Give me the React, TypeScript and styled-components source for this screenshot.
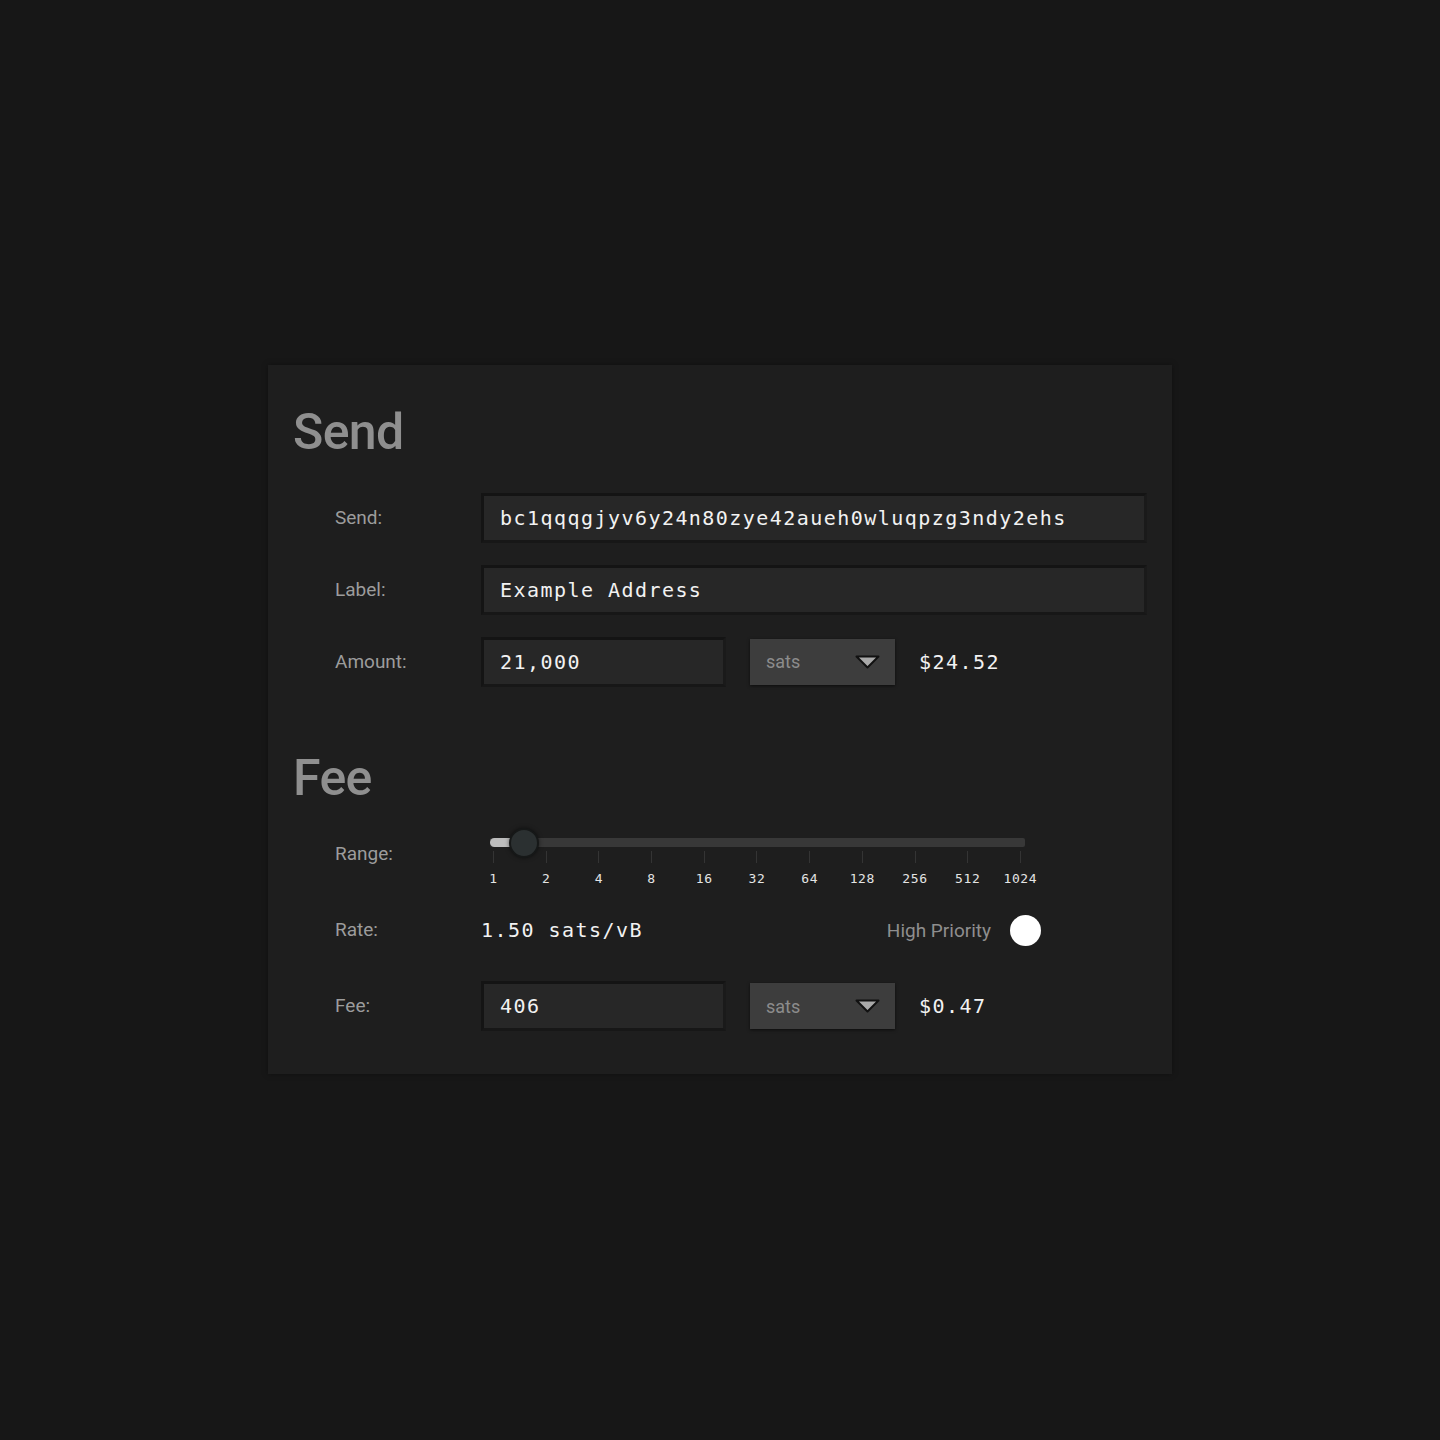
import React from "react";
import styled, { createGlobalStyle } from "styled-components";

const Global = createGlobalStyle`
  html, body { margin: 0; padding: 0; background: #171717; }
  body { font-family: Roboto, "Liberation Sans", sans-serif; }
`;

const Page = styled.div`
  min-height: 1440px;
  padding: 365px 0 0 268px;
  box-sizing: border-box;
`;

const Panel = styled.section`
  width: 904px;
  box-sizing: border-box;
  background: #1e1e1e;
  padding: 41px 24px 43px 25px;
  display: flex;
  flex-direction: column;
  box-shadow: 0 0 6px rgba(0, 0, 0, 0.35);
`;

const Heading = styled.h2<{ $mt?: number }>`
  margin: ${(p) => p.$mt ?? 0}px 0 0 0;
  font-family: Roboto, "Liberation Sans", sans-serif;
  font-weight: 500;
  font-size: 50px;
  line-height: 52px;
  letter-spacing: -0.6px;
  color: #8f8f8f;
`;

const Row = styled.div<{ $mt: number; $h?: number; $align?: string }>`
  display: flex;
  align-items: ${(p) => p.$align ?? "center"};
  margin-top: ${(p) => p.$mt}px;
  height: ${(p) => (p.$h ? `${p.$h}px` : "auto")};
  padding-left: 42px;
`;

const Label = styled.div<{ $lh?: number }>`
  width: 146px;
  flex: none;
  font-size: 19px;
  line-height: ${(p) => p.$lh ?? 24}px;
  color: #9c9c9c;
`;

const mono = `"DejaVu Sans Mono", "Liberation Mono", monospace`;

const TextInput = styled.div<{ $w?: number }>`
  box-sizing: border-box;
  height: 50px;
  width: ${(p) => (p.$w ? `${p.$w}px` : "666px")};
  background: #272727;
  border: 3px solid #141414;
  border-right-color: #1a1a1a;
  border-bottom-color: #171717;
  padding-left: 16px;
  display: flex;
  align-items: center;
  font-family: ${mono};
  font-size: 20px;
  letter-spacing: 1.45px;
  color: #f2f2f2;
  white-space: nowrap;
`;

const Select = styled.div`
  box-sizing: border-box;
  width: 145px;
  height: 46px;
  margin-left: 24px;
  background: #3d3d3d;
  box-shadow: 0 1px 3px rgba(0, 0, 0, 0.6);
  padding: 0 15px 0 16px;
  display: flex;
  align-items: center;
  justify-content: space-between;
  font-size: 18px;
  color: #8c8c8c;
`;

const Fiat = styled.div`
  margin-left: 24px;
  font-family: ${mono};
  font-size: 20px;
  letter-spacing: 1.45px;
  color: #f2f2f2;
`;

const Slider = styled.div`
  width: 535px;
  margin-left: 9px;
  display: flex;
  flex-direction: column;
`;

const TrackArea = styled.div`
  position: relative;
  height: 16px;
`;

const Track = styled.div`
  position: absolute;
  left: 0;
  right: 0;
  top: 3px;
  height: 9px;
  background: #383838;
  border-radius: 2px;
`;

const Fill = styled.div`
  position: absolute;
  left: 0;
  top: 3px;
  height: 9px;
  background: #bdbdbd;
  border-radius: 5px 0 0 5px;
`;

const Thumb = styled.div`
  position: absolute;
  top: 7.5px;
  width: 30px;
  height: 30px;
  margin: -15px 0 0 -15px;
  box-sizing: border-box;
  border-radius: 50%;
  background: #2b3031;
  border: 2px solid #161818;
  box-shadow: 0 0 4px rgba(0, 0, 0, 0.5);
`;

const Ticks = styled.div`
  display: flex;
  justify-content: space-between;
  padding: 0 4px 0 3px;
`;

const Tick = styled.div`
  width: 1px;
  display: flex;
  flex-direction: column;
  align-items: center;
`;

const TickLine = styled.div`
  width: 1px;
  height: 12px;
  background: #343434;
`;

const TickLabel = styled.div`
  margin-top: 8px;
  font-family: ${mono};
  font-size: 13px;
  line-height: 16px;
  letter-spacing: 0.6px;
  color: #e4e4e4;
  white-space: nowrap;
`;

const RateBox = styled.div`
  width: 560px;
  display: flex;
  align-items: center;
  justify-content: space-between;
`;

const RateText = styled.div`
  font-family: ${mono};
  font-size: 20px;
  letter-spacing: 1.45px;
  color: #f2f2f2;
`;

const Priority = styled.div`
  display: flex;
  align-items: center;
  gap: 19px;
  font-size: 19px;
  color: #8e8e8e;
`;

const Toggle = styled.div`
  width: 31px;
  height: 31px;
  border-radius: 50%;
  background: #ffffff;
`;

const Caret = () => (
  <svg width="25" height="14" viewBox="0 0 25 14">
    <polygon points="1.5,1.5 23.5,1.5 12.5,12.5" fill="#a9a9a9" stroke="#111" strokeWidth="2" strokeLinejoin="round" />
  </svg>
);

const ticks = [1, 2, 4, 8, 16, 32, 64, 128, 256, 512, 1024];
const rate = 1.5;

export default function App() {
  const pos = 3 + (Math.log2(rate) * 528) / 10;
  return (
    <>
      <Global />
      <Page>
        <Panel>
          <Heading>Send</Heading>
          <Row $mt={35} $h={50}>
            <Label>Send:</Label>
            <TextInput>bc1qqqgjyv6y24n80zye42aueh0wluqpzg3ndy2ehs</TextInput>
          </Row>
          <Row $mt={22} $h={50}>
            <Label>Label:</Label>
            <TextInput>Example Address</TextInput>
          </Row>
          <Row $mt={21} $h={51}>
            <Label>Amount:</Label>
            <TextInput $w={245}>21,000</TextInput>
            <Select>
              sats
              <Caret />
            </Select>
            <Fiat>$24.52</Fiat>
          </Row>

          <Heading $mt={65}>Fee</Heading>
          <Row $mt={31} $align="flex-start">
            <Label $lh={38}>Range:</Label>
            <Slider>
              <TrackArea>
                <Track />
                <Fill style={{ width: pos - 10 }} />
                <Thumb style={{ left: pos }} />
              </TrackArea>
              <Ticks>
                {ticks.map((t) => (
                  <Tick key={t}>
                    <TickLine />
                    <TickLabel>{t}</TickLabel>
                  </Tick>
                ))}
              </Ticks>
            </Slider>
          </Row>
          <Row $mt={18} $h={50}>
            <Label>Rate:</Label>
            <RateBox>
              <RateText>1.50 sats/vB</RateText>
              <Priority>
                High Priority
                <Toggle />
              </Priority>
            </RateBox>
          </Row>
          <Row $mt={26} $h={50}>
            <Label>Fee:</Label>
            <TextInput $w={245}>406</TextInput>
            <Select>
              sats
              <Caret />
            </Select>
            <Fiat>$0.47</Fiat>
          </Row>
        </Panel>
      </Page>
    </>
  );
}
